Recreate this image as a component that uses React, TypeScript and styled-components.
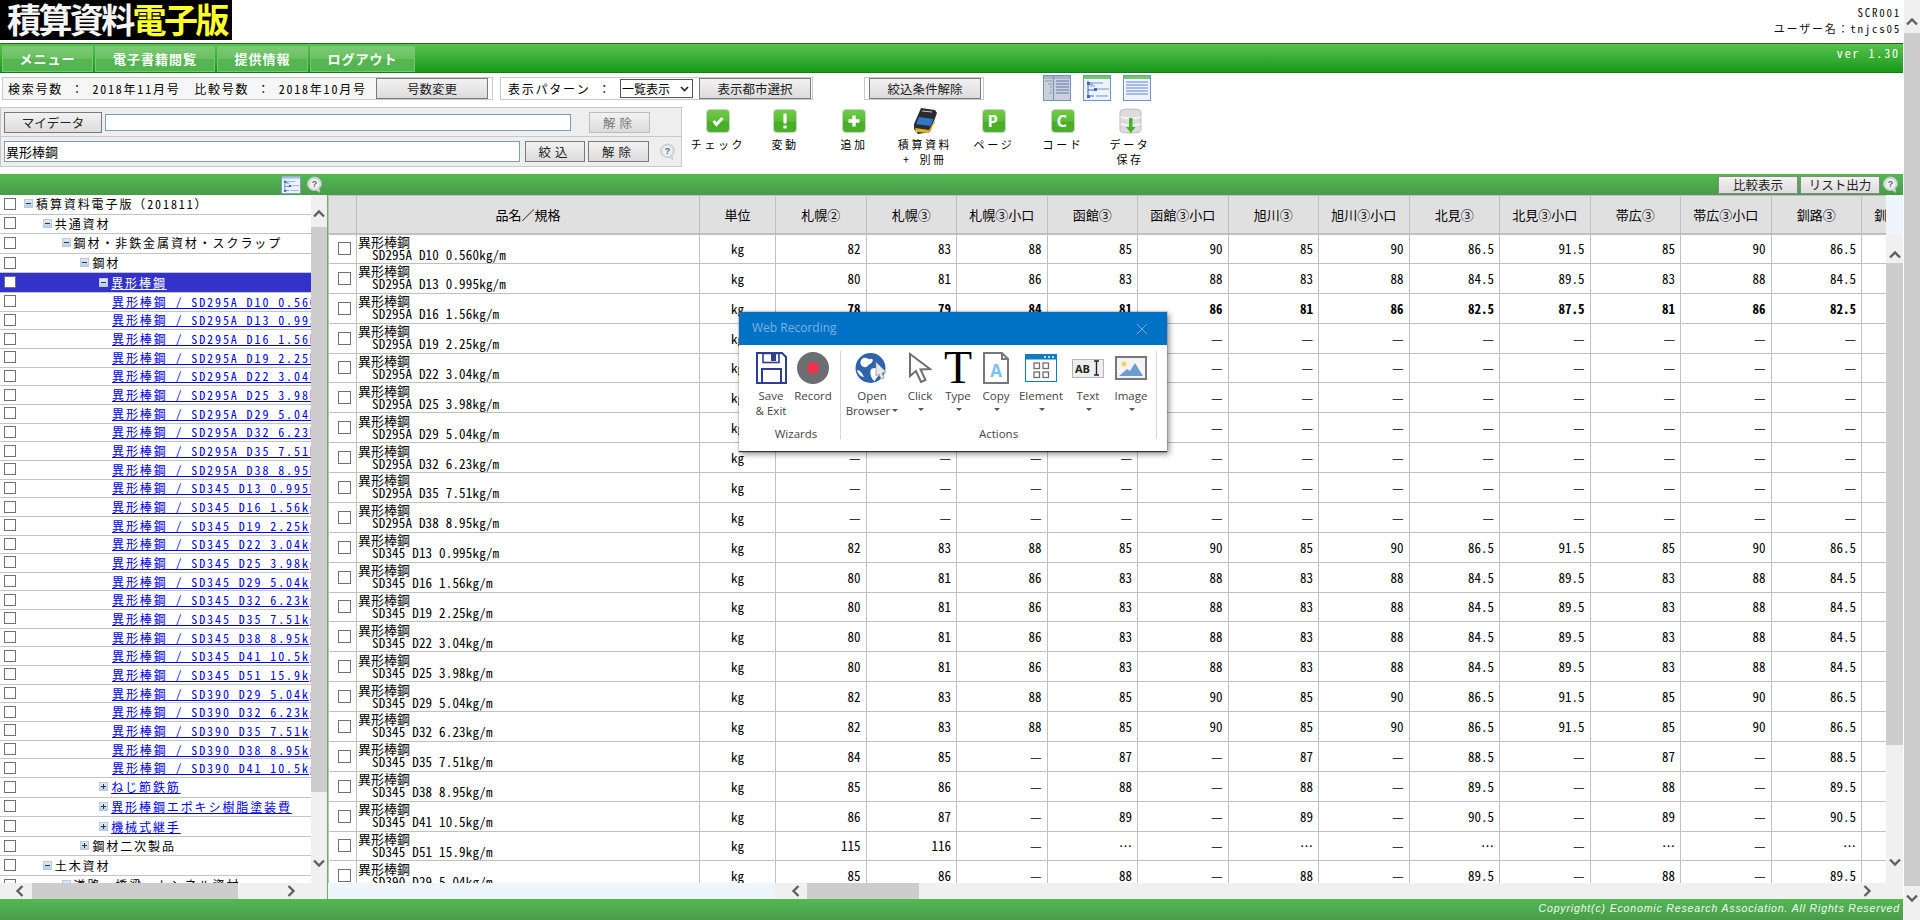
import React from 'react';
import styled, { createGlobalStyle, css } from 'styled-components';

const GOTHIC = `"Noto Sans Mono CJK JP", "Noto Sans CJK JP", "DejaVu Sans Mono", monospace`;
const UI = `"Open Sans", "Noto Sans", sans-serif`;

const GlobalStyle = createGlobalStyle`
  html, body {
    margin: 0;
    padding: 0;
    height: 920px;
    overflow: hidden;
    background: #fff;
  }
  * { box-sizing: border-box; }
`;

const Shell = styled.div`
  position: relative;
  display: flex;
  width: 1920px;
  height: 920px;
  font-family: ${GOTHIC};
  font-size: 12px;
  color: #000;
`;

const Page = styled.div`
  width: 1903px;
  height: 920px;
  display: flex;
  flex-direction: column;
  overflow: hidden;
`;

/* scrollbars */
const Bar = styled.div<{ $vertical?: boolean; $fill?: boolean; $w?: number }>`
  flex: ${({ $fill }) => ($fill ? 1 : 'none')};
  display: flex;
  align-items: center;
  background: #f0f0f0;
  ${({ $vertical, $w }) =>
    $vertical
      ? css`
          flex-direction: column;
          width: ${$w ?? 16}px;
        `
      : css`
          flex-direction: row;
          height: 16px;
        `}
`;

const Thumb = styled.div<{ $vertical?: boolean; $len: number }>`
  flex: none;
  background: #cdcdcd;
  ${({ $vertical, $len }) =>
    $vertical ? `width: 100%; height: ${$len}px;` : `height: 100%; width: ${$len}px;`}
`;

const Spacer = styled.div`
  flex: 1;
`;

const Gap = styled.div<{ $w?: number; $h?: number }>`
  flex: none;
  width: ${({ $w }) => ($w === undefined ? 'auto' : `${$w}px`)};
  height: ${({ $h }) => ($h === undefined ? 'auto' : `${$h}px`)};
`;

const ArrowBox = styled.div`
  flex: none;
  width: 16px;
  height: 16px;
  display: flex;
  align-items: center;
  justify-content: center;
`;

const ChevronSvg = styled.svg<{ $rot: number }>`
  transform: rotate(${({ $rot }) => $rot}deg);
`;

const Chevron = ({ dir }: { dir: 'up' | 'down' | 'left' | 'right' }) => {
  const rot = { up: 0, right: 90, down: 180, left: 270 }[dir];
  return (
    <ArrowBox>
      <ChevronSvg $rot={rot} width="12" height="12" viewBox="0 0 12 12">
        <path d="M1 8.5 L6 3.5 L11 8.5" fill="none" stroke="#606060" strokeWidth="2.4" />
      </ChevronSvg>
    </ArrowBox>
  );
};

/* header */
const TopRow = styled.div`
  height: 43px;
  flex: none;
  display: flex;
  justify-content: space-between;
`;

const Logo = styled.div`
  width: 232px;
  height: 40px;
  background: #000;
  color: #f4f4f4;
  font-family: "Noto Sans CJK JP", sans-serif;
  font-weight: 700;
  font-size: 34px;
  line-height: 38px;
  letter-spacing: -2.6px;
  padding-left: 7px;
  white-space: nowrap;
  span { color: #ffff2e; }
`;

const UserInfo = styled.div`
  text-align: right;
  padding: 5px 2px 0 0;
  font-size: 11px;
  letter-spacing: 1.75px;
  line-height: 15.5px;
  color: #111;
`;

const NavBar = styled.div`
  flex: none;
  height: 30px;
  display: flex;
  justify-content: space-between;
  align-items: flex-start;
  padding: 2px 2px 0;
  gap: 2px;
  background: linear-gradient(#59c24d, #17981a);
  border-top: 1px solid #1f6a1f;
  border-bottom: 1px solid #0f7f14;
`;

const NavGroup = styled.div`
  display: flex;
  gap: 2px;
`;

const NavButton = styled.div<{ $w: number }>`
  width: ${({ $w }) => $w}px;
  height: 26px;
  line-height: 24px;
  text-align: center;
  color: #fff;
  font-size: 13px;
  font-weight: 700;
  letter-spacing: 1px;
  border: 1px solid #74c874;
  background: linear-gradient(#7cca74 0%, #68c060 48%, #55b552 52%, #52b650 100%);
`;

const Version = styled.div`
  color: #fff;
  font-size: 12px;
  line-height: 13px;
  letter-spacing: 1.9px;
  padding-right: 1px;
`;

const FilterRow = styled.div`
  flex: none;
  height: 34px;
  display: flex;
  align-items: flex-start;
  padding: 4px 0 0 2px;
`;

const OutlineBox = styled.div<{ $w: number; $ml?: number }>`
  width: ${({ $w }) => $w}px;
  margin-left: ${({ $ml }) => $ml ?? 0}px;
  height: 23px;
  display: flex;
  align-items: center;
  border: 1px solid #c8c8c8;
`;

const InfoText = styled.div`
  flex: 1;
  align-self: stretch;
  display: flex;
  align-items: center;
  padding-left: 5px;
  letter-spacing: 1.78px;
  white-space: nowrap;
  background: #f6f6f6;
  font-size: 12px;
  overflow: hidden;
`;

const PatternLabel = styled.div`
  padding-left: 7px;
  width: 119px;
  letter-spacing: 1.75px;
  white-space: nowrap;
`;

const PatternSelect = styled.div`
  width: 73px;
  height: 19px;
  border: 1px solid #555;
  background: #fff;
  display: flex;
  align-items: center;
  justify-content: space-between;
  font-size: 12px;
  padding: 0 3px 0 1px;
  white-space: nowrap;
`;

const GrayButton = styled.div<{ $w: number; $disabled?: boolean; $spaced?: boolean }>`
  flex: none;
  width: ${({ $w }) => $w}px;
  height: 21px;
  line-height: 19px;
  text-align: center;
  white-space: nowrap;
  font-size: 12.5px;
  background: linear-gradient(#f2f2f2, #dcdcdc);
  border: 1px solid ${({ $disabled }) => ($disabled ? '#bcbcbc' : '#7a7a7a')};
  color: ${({ $disabled }) => ($disabled ? '#777' : '#222')};
  letter-spacing: ${({ $spaced }) => ($spaced ? '4px' : '0')};
`;

const ViewIcons = styled.div`
  margin-left: 59px;
  display: flex;
  gap: 12px;
  margin-top: -2px;
`;

const ToolRow = styled.div`
  flex: none;
  height: 67px;
  display: flex;
  align-items: flex-start;
`;

const SearchPanel = styled.div`
  width: 682px;
  height: 60px;
  background: #eeeeee;
  border: 1px solid #c8c8c8;
  display: flex;
  flex-direction: column;
`;

const SearchLine = styled.div<{ $top?: boolean }>`
  height: 29px;
  display: flex;
  align-items: center;
  padding-left: 3px;
  gap: 3px;
  ${({ $top }) => $top && `border-bottom: 1px solid #c8c8c8;`}
`;

const TextBox = styled.div<{ $w: number; $h: number; $mr?: number }>`
  width: ${({ $w }) => $w}px;
  height: ${({ $h }) => $h}px;
  margin-right: ${({ $mr }) => $mr ?? 0}px;
  background: #fff;
  border: 1px solid #7f9db9;
  padding-left: 1px;
  font-size: 13px;
  line-height: ${({ $h }) => $h - 2}px;
`;

const HelpSlot = styled.div`
  margin-left: 7px;
  display: flex;
`;

const ToolStrip = styled.div`
  display: flex;
`;

const Tool = styled.div<{ $w: number }>`
  width: ${({ $w }) => $w}px;
  display: flex;
  flex-direction: column;
  align-items: center;
  font-size: 11px;
  letter-spacing: 2.6px;
  line-height: 15px;
  text-align: center;
  white-space: pre-line;
`;

const ToolIconBox = styled.div`
  width: 28px;
  height: 28px;
  margin-bottom: 2px;
  display: flex;
  align-items: center;
  justify-content: center;
`;

/* section bar */
const SectionBar = styled.div`
  flex: none;
  height: 21px;
  display: flex;
  background: linear-gradient(#54b854, #489c48);
`;

const SectionLeft = styled.div`
  width: 328px;
  display: flex;
  align-items: center;
  padding-left: 281px;
  gap: 5px;
`;

const SectionRight = styled.div`
  flex: 1;
  display: flex;
  justify-content: flex-end;
  align-items: center;
  gap: 2px;
  padding-right: 4px;
`;

const SmallButton = styled(GrayButton)`
  height: 18px;
  line-height: 16px;
  border-color: #888;
`;

/* main */
const Main = styled.div`
  flex: none;
  height: 704px;
  display: flex;
`;

const TreePane = styled.div`
  width: 328px;
  flex: none;
  display: flex;
  flex-direction: column;
  border-right: 1px solid #60b860;
`;

const TreeBody = styled.div`
  height: 688px;
  display: flex;
`;

const TreeList = styled.div`
  width: 311px;
  flex: none;
  overflow: hidden;
  letter-spacing: 1.9px;
  font-size: 12px;
`;

const TreeRow = styled.div<{ $selected?: boolean; $leaf?: boolean }>`
  height: ${({ $leaf }) => ($leaf ? 18.66 : 19.6)}px;
  display: flex;
  align-items: center;
  white-space: nowrap;
  overflow: hidden;
  padding-bottom: 1px;
  border-bottom: 1px solid #c4c4c4;
  background: ${({ $selected }) => ($selected ? '#3333cc' : 'transparent')};
`;

const Check = styled.span<{ $size?: number }>`
  flex: none;
  display: inline-block;
  width: ${({ $size }) => $size ?? 12}px;
  height: ${({ $size }) => $size ?? 12}px;
  background: #fff;
  border: 1px solid #707070;
`;

const TreeCheck = styled(Check)`
  margin-left: 4px;
`;

const Indent = styled.span<{ $px: number }>`
  flex: none;
  width: ${({ $px }) => $px}px;
`;

const Toggle = styled.span`
  flex: none;
  width: 9px;
  height: 9px;
  margin-right: 3px;
  display: flex;
  align-items: center;
  justify-content: center;
  background: linear-gradient(#dfeaf6, #b9cfe6);
  border: 1px solid #b6cbe0;
  font-size: 0;
`;

const ToggleMark = styled.span<{ $plus?: boolean }>`
  position: relative;
  display: block;
  width: 5px;
  height: 1px;
  background: #333;
  ${({ $plus }) =>
    $plus &&
    `&:after { content: ''; position: absolute; left: 2px; top: -2px; width: 1px; height: 5px; background: #333; }`}
`;

const TreeLink = styled.a<{ $selected?: boolean }>`
  color: ${({ $selected }) => ($selected ? '#fff' : '#0000ee')};
  text-decoration: underline;
`;

const TablePane = styled.div`
  flex: 1;
  min-width: 0;
  display: flex;
  flex-direction: column;
`;

const TableArea = styled.div`
  height: 688px;
  display: flex;
`;

const TableClip = styled.div`
  width: 1558px;
  flex: none;
  overflow: hidden;
`;

const DataTable = styled.table`
  table-layout: fixed;
  border-collapse: collapse;
  width: 1623.5px;
  font-size: 13px;
`;

const Col = styled.col<{ $w: number }>`
  width: ${({ $w }) => $w}px;
`;

const HeadCell = styled.th`
  height: 38px;
  padding: 0;
  background: #e0e0e0;
  border: 1px solid #c0c0c0;
  border-bottom-width: 2px;
  font-weight: 400;
  font-size: 13px;
  text-align: center;
  white-space: nowrap;
  overflow: hidden;
`;

const BodyRow = styled.tr<{ $bold?: boolean }>`
  height: 29.89px;
  font-weight: ${({ $bold }) => ($bold ? 700 : 400)};
`;

const Cell = styled.td`
  padding: 0 5px 0 0;
  border: 1px solid #c0c0c0;
  text-align: right;
  white-space: nowrap;
  overflow: hidden;
`;

const UnitCell = styled(Cell)`
  padding: 0;
  text-align: center;
  font-weight: 400;
`;

const CheckCell = styled.td`
  padding: 0 0 0 9px;
  border: 1px solid #c0c0c0;
  font-size: 0;
`;

const NameCell = styled.td`
  padding: 0 0 0 1px;
  border: 1px solid #c0c0c0;
  line-height: 13px;
  white-space: nowrap;
  font-weight: 400;
  overflow: hidden;
`;

const NameMain = styled.div`
  font-size: 13px;
  margin-top: -2px;
`;

const NameSpec = styled.div`
  padding-left: 14px;
  font-size: 13px;
  letter-spacing: 0.2px;
`;

const Corner = styled.div`
  flex: none;
  height: 39px;
  background: #eff5fc;
`;

const TableScrollColumn = styled.div`
  flex: none;
  width: 17px;
  display: flex;
  flex-direction: column;
`;

const HScrollRow = styled.div`
  display: flex;
  height: 16px;
`;

const FrozenFill = styled.div`
  flex: none;
  width: 447px;
  background: #eff5fc;
`;

const Footer = styled.div`
  flex: none;
  height: 21px;
  background: linear-gradient(#54b854, #489c48);
  color: #f4fbf4;
  font-family: "Liberation Sans", Arial, sans-serif;
  font-style: italic;
  font-size: 10.5px;
  letter-spacing: 0.85px;
  text-align: right;
  line-height: 19px;
  padding-right: 3px;
`;

const PageScroll = styled.div`
  flex: none;
  width: 17px;
  height: 920px;
  padding-left: 1px;
  display: flex;
`;

/* recording popup */
const Popup = styled.div`
  position: absolute;
  left: 739px;
  top: 312px;
  width: 428px;
  height: 140px;
  background: #fff;
  font-family: ${UI};
  color: #444;
  border-bottom: 1px solid #333;
  box-shadow: 2px 2px 6px rgba(0, 0, 0, 0.45), 0 0 0 1px rgba(0, 0, 0, 0.12);
`;

const PopupTitle = styled.div`
  height: 33px;
  background: #0072c6;
  color: #78b4e2;
  font-size: 12px;
  line-height: 32px;
  padding-left: 13px;
  display: flex;
  justify-content: space-between;
`;

const PopupClose = styled.div`
  width: 44px;
  display: flex;
  align-items: center;
  justify-content: center;
  padding-right: 6px;
`;

const PopupBody = styled.div`
  display: flex;
  height: 106px;
  padding-top: 6px;
`;

const RibbonGroup = styled.div<{ $w: number; $pl?: number }>`
  width: ${({ $w }) => $w}px;
  padding-left: ${({ $pl }) => $pl ?? 0}px;
  flex: none;
  display: flex;
  flex-direction: column;
  border-right: 1px solid #d6d6d6;
  height: 88px;
`;

const RibbonItems = styled.div`
  display: flex;
  flex: 1;
  margin-top: -1px;
`;

const RibbonItem = styled.div<{ $w: number }>`
  width: ${({ $w }) => $w}px;
  flex: none;
  display: flex;
  flex-direction: column;
  align-items: center;
  text-align: center;
  font-size: 11.5px;
  line-height: 14.5px;
  white-space: pre-line;
`;

const RibbonIcon = styled.div`
  height: 36px;
  margin-bottom: 3px;
  display: flex;
  align-items: center;
  justify-content: center;
`;

const BigT = styled.span`
  font-family: "Liberation Serif", serif;
  font-size: 46px;
  line-height: 36px;
  color: #000;
`;

const Caret = styled.span`
  display: inline-block;
  width: 0;
  height: 0;
  border-left: 3px solid transparent;
  border-right: 3px solid transparent;
  border-top: 3px solid #555;
  vertical-align: middle;
  margin: 0 0 2px 2px;
`;

const CaretLine = styled.div`
  height: 14px;
  line-height: 12px;
`;

const GroupName = styled.div`
  flex: none;
  height: 16px;
  margin-bottom: -3px;
  text-align: center;
  font-size: 11.5px;
  line-height: 16px;
`;

/* drawn icons */
const HelpIcon = ({ size = 16 }: { size?: number }) => (
  <svg width={size} height={size} viewBox="0 0 16 16">
    <path d="M8 1 a7 6.4 0 1 0 2 12.6 L13 15.4 L12.3 11.8 A6.8 6.2 0 0 0 8 1z" fill="#d4dde0" stroke="#bcc6c8" strokeWidth="0.7" />
    <circle cx="8" cy="7.4" r="4.6" fill="#eef2f3" />
    <text x="8" y="10.4" textAnchor="middle" fontSize="8.5" fontWeight="700" fill="#667" fontFamily="Liberation Sans">?</text>
  </svg>
);

const TreeViewIcon = ({ w = 20, h = 18, strip = '#75c76a' }: { w?: number; h?: number; strip?: string }) => (
  <svg width={w} height={h} viewBox="0 0 28 26">
    <rect x="0.5" y="0.5" width="27" height="25" fill="#eef2fa" stroke="#6f93cf" />
    <rect x="1" y="1" width="26" height="3" fill={strip} />
    <path d="M5 6 V21 M5 9 H10 M5 15 H12 M5 21 H11" fill="none" stroke="#3c68c6" />
    <path d="M7 8 H20 M13 14 H26 M13 21 H25 M7 11 H12 " fill="none" stroke="#9db4dd" strokeWidth="1.4" />
    <rect x="4" y="7" width="3" height="3" fill="#3c68c6" />
    <rect x="11" y="13" width="3" height="3" fill="#3c68c6" />
    <rect x="4" y="20" width="3" height="3" fill="#3c68c6" />
  </svg>
);

const SplitViewIcon = () => (
  <svg width="28" height="26" viewBox="0 0 28 26">
    <rect x="0.5" y="0.5" width="27" height="25" fill="#cdd0d8" stroke="#6f93cf" />
    <rect x="1" y="1" width="26" height="3" fill="#a6b3cb" />
    <path d="M10.5 1 V25" stroke="#7b95c8" strokeWidth="1.2" />
    <path d="M13 6 H26 M13 9 H26 M13 12 H26 M13 15 H26 M13 18 H26" stroke="#8297c0" strokeWidth="1.4" />
    <path d="M2 6 H9 M5 9 H9 M7 12 H9 M7 15 H9 M6 18 H9" stroke="#8297c0" />
  </svg>
);

const ListViewIcon = () => (
  <svg width="28" height="26" viewBox="0 0 28 26">
    <rect x="0.5" y="0.5" width="27" height="25" fill="#eef2fa" stroke="#6f93cf" />
    <rect x="1" y="1" width="26" height="3" fill="#75c76a" />
    <path d="M3 7 H25 M3 10 H25 M3 13 H25 M3 16 H25 M3 19 H25" stroke="#5f86d6" strokeWidth="1.2" />
  </svg>
);

const GreenBadge = ({ children }: { children: React.ReactNode }) => (
  <svg width="24" height="24" viewBox="0 0 24 24">
    <defs>
      <linearGradient id="badge" x1="0" y1="0" x2="0" y2="1">
        <stop offset="0" stopColor="#72c94a" />
        <stop offset="0.5" stopColor="#5cbd36" />
        <stop offset="0.55" stopColor="#48ad28" />
        <stop offset="1" stopColor="#4ab02a" />
      </linearGradient>
    </defs>
    <rect x="0.5" y="0.5" width="23" height="23" rx="3.5" fill="url(#badge)" stroke="#c6d6c2" strokeWidth="1" />
    {children}
  </svg>
);

const BookIcon = () => (
  <svg width="23" height="26" viewBox="0 0 23 26">
    <path d="M7 0 L21 2 L23 5 L16 24 L4 26 L0 21 L0 16z" fill="#2b2b30" />
    <path d="M5 9 L19.5 11 L16.5 18 L2 16z" fill="#2f78c8" />
    <path d="M8 3 L18 4" stroke="#c8c8c8" strokeWidth="1" />
    <path d="M1 20 L15 22 L20 13 L21 14 L15 25 L2 24z" fill="#e3b22c" />
  </svg>
);

const DbIcon = () => (
  <svg width="23" height="26" viewBox="0 0 23 26">
    <path d="M1 4 Q1 1 11.5 1 Q22 1 22 4 V22 Q22 25 11.5 25 Q1 25 1 22z" fill="#dcdcdc" stroke="#bcbcbc" />
    <path d="M1.5 9 Q11.5 12 21.5 9 M1.5 16 Q11.5 19 21.5 16" fill="none" stroke="#f7f7f7" strokeWidth="1.6" />
    <path d="M10 10 H13.5 V19 H16.5 L11.8 25 L7 19 H10z" fill="#48b030" />
  </svg>
);

const SaveIcon = () => (
  <svg width="31" height="32" viewBox="0 0 31 32">
    <path d="M1 1 H26 L30 5 V31 H1z" fill="#fff" stroke="#2e3f93" strokeWidth="2" />
    <rect x="7" y="1.5" width="16" height="9" fill="#fff" stroke="#2e3f93" strokeWidth="1.6" />
    <rect x="15" y="2" width="5" height="7" fill="#2e3f93" />
    <rect x="6" y="17" width="19" height="14" fill="#fff" stroke="#2e3f93" strokeWidth="2" />
  </svg>
);

const RecordIcon = () => (
  <svg width="32" height="32" viewBox="0 0 32 32">
    <circle cx="16" cy="16" r="16" fill="#6d6e71" />
    <circle cx="16" cy="16" r="6" fill="#ee3450" />
  </svg>
);

const GlobeIcon = () => (
  <svg width="34" height="32" viewBox="0 0 34 32">
    <circle cx="15.5" cy="16" r="15" fill="#2f63ac" />
    <path d="M8 6 C12 5 14 8 16 7 C18 6 19 10 15 12 C12 13 13 16 9 15 C5 14 4 9 8 6z M16 17 C20 15 26 16 25 20 C25 24 21 25 20 29 C17 28 14 22 16 17z M2 18 C5 18 7 21 9 25 C6 25 3 22 2 18z" fill="#fff" />
    <path d="M21 10 L31 20 L27 21 L29 26 L26 27 L24 22 L21 24z" fill="#e8e8e8" stroke="#999" strokeWidth="0.8" />
  </svg>
);

const CursorIcon = () => (
  <svg width="24" height="32" viewBox="0 0 24 32">
    <path d="M2 2 L2 24 L8 19 L13 30 L17.5 28 L12.5 17.5 L22 17z" fill="#fff" stroke="#6d6e71" strokeWidth="2" />
  </svg>
);

const CopyIcon = () => (
  <svg width="26" height="32" viewBox="0 0 26 32">
    <path d="M1 1 H19 L25 7 V31 H1z" fill="#fff" stroke="#77787b" strokeWidth="2" />
    <path d="M19 1 V7 H25" fill="none" stroke="#77787b" strokeWidth="2" />
    <text x="13" y="25" textAnchor="middle" fontSize="17" fontWeight="700" fill="#7cc1ea" fontFamily="Open Sans">A</text>
  </svg>
);

const ElementIcon = () => (
  <svg width="32" height="28" viewBox="0 0 32 28">
    <rect x="0.5" y="0.5" width="31" height="27" fill="#fff" stroke="#0f7cbd" />
    <rect x="0.5" y="0.5" width="31" height="5" fill="#0f7cbd" />
    <path d="M19 3 H21 M23 3 H25 M27 3 H29" stroke="#fff" strokeWidth="1.4" />
    <rect x="9" y="9" width="5.5" height="5.5" fill="#fff" stroke="#6d6e71" strokeWidth="1.3" />
    <rect x="18" y="9" width="5.5" height="5.5" fill="#fff" stroke="#6d6e71" strokeWidth="1.3" />
    <rect x="9" y="18" width="5.5" height="5.5" fill="#fff" stroke="#6d6e71" strokeWidth="1.3" />
    <rect x="18" y="18" width="5.5" height="5.5" fill="#fff" stroke="#6d6e71" strokeWidth="1.3" />
  </svg>
);

const TextToolIcon = () => (
  <svg width="32" height="19" viewBox="0 0 32 19">
    <rect x="0.5" y="0.5" width="31" height="18" fill="#eeeeee" stroke="#b5b5b5" />
    <text x="3" y="14" fontSize="11" fontWeight="700" fill="#222" fontFamily="Open Sans">AB</text>
    <path d="M22 2 H27 M24.5 2 V16 M22 16 H27" stroke="#222" strokeWidth="1.4" fill="none" />
  </svg>
);

const ImageToolIcon = () => (
  <svg width="32" height="24" viewBox="0 0 32 24">
    <rect x="1" y="1" width="30" height="22" fill="#f4f4f4" stroke="#77787b" strokeWidth="2" />
    <circle cx="9" cy="8" r="2.6" fill="#f2d36b" />
    <path d="M4 20 L12 13 L15 15 L20 7 L28 20z" fill="#6f9bd2" />
  </svg>
);

const TOOLS: { icon: React.ReactNode; label: string; w: number }[] = [
  { icon: <GreenBadge><path d="M7.5 12 L10.5 15.5 L16.5 9" fill="none" stroke="#fff" strokeWidth="3" /></GreenBadge>, label: 'チェック', w: 72 },
  { icon: <GreenBadge><rect x="10.4" y="4.5" width="3.2" height="10" rx="1" fill="#fff" /><rect x="10.4" y="16.5" width="3.2" height="3" fill="#fff" /></GreenBadge>, label: '変動', w: 62 },
  { icon: <GreenBadge><path d="M12 6.5 V17.5 M6.5 12 H17.5" stroke="#fff" strokeWidth="3.4" /></GreenBadge>, label: '追加', w: 76 },
  { icon: <BookIcon />, label: '積算資料\n+ 別冊', w: 66 },
  { icon: <GreenBadge><text x="12" y="18" textAnchor="middle" fontSize="16.5" fontWeight="700" fill="#fff" fontFamily="Open Sans">P</text></GreenBadge>, label: 'ページ', w: 72 },
  { icon: <GreenBadge><text x="12" y="18" textAnchor="middle" fontSize="16.5" fontWeight="700" fill="#fff" fontFamily="Open Sans">C</text></GreenBadge>, label: 'コード', w: 66 },
  { icon: <DbIcon />, label: 'データ\n保存', w: 68 },
];

const CITIES = ['札幌②', '札幌③', '札幌③小口', '函館③', '函館③小口', '旭川③', '旭川③小口', '北見③', '北見③小口', '帯広③', '帯広③小口', '釧路③', '釧路③小口'];

const series = (b: number) => [b, b + 1, b + 6, b + 3, b + 8, b + 3, b + 8, b + 4.5, b + 9.5, b + 3, b + 8, b + 4.5, ''].map(String);
const dashes = () => [...Array(12).fill('—'), ''];
const big = (b: number) => [b, b + 1, '—', b + 3, '—', b + 3, '—', b + 4.5, '—', b + 3, '—', b + 4.5, ''].map(String);

const ROWS: { spec: string; values: string[]; bold?: boolean }[] = [
  { spec: 'SD295A D10 0.560kg/m', values: series(82) },
  { spec: 'SD295A D13 0.995kg/m', values: series(80) },
  { spec: 'SD295A D16 1.56kg/m', values: series(78), bold: true },
  { spec: 'SD295A D19 2.25kg/m', values: dashes() },
  { spec: 'SD295A D22 3.04kg/m', values: dashes() },
  { spec: 'SD295A D25 3.98kg/m', values: dashes() },
  { spec: 'SD295A D29 5.04kg/m', values: dashes() },
  { spec: 'SD295A D32 6.23kg/m', values: dashes() },
  { spec: 'SD295A D35 7.51kg/m', values: dashes() },
  { spec: 'SD295A D38 8.95kg/m', values: dashes() },
  { spec: 'SD345 D13 0.995kg/m', values: series(82) },
  { spec: 'SD345 D16 1.56kg/m', values: series(80) },
  { spec: 'SD345 D19 2.25kg/m', values: series(80) },
  { spec: 'SD345 D22 3.04kg/m', values: series(80) },
  { spec: 'SD345 D25 3.98kg/m', values: series(80) },
  { spec: 'SD345 D29 5.04kg/m', values: series(82) },
  { spec: 'SD345 D32 6.23kg/m', values: series(82) },
  { spec: 'SD345 D35 7.51kg/m', values: big(84) },
  { spec: 'SD345 D38 8.95kg/m', values: big(85) },
  { spec: 'SD345 D41 10.5kg/m', values: big(86) },
  { spec: 'SD345 D51 15.9kg/m', values: ['115', '116', '—', '…', '—', '…', '—', '…', '—', '…', '—', '…', ''] },
  { spec: 'SD390 D29 5.04kg/m', values: big(85) },
];

const TREE_LINKS = [
  'SD295A D10 0.560kg/m', 'SD295A D13 0.995kg/m', 'SD295A D16 1.56kg/m', 'SD295A D19 2.25kg/m',
  'SD295A D22 3.04kg/m', 'SD295A D25 3.98kg/m', 'SD295A D29 5.04kg/m', 'SD295A D32 6.23kg/m',
  'SD295A D35 7.51kg/m', 'SD295A D38 8.95kg/m', 'SD345 D13 0.995kg/m', 'SD345 D16 1.56kg/m',
  'SD345 D19 2.25kg/m', 'SD345 D22 3.04kg/m', 'SD345 D25 3.98kg/m', 'SD345 D29 5.04kg/m',
  'SD345 D32 6.23kg/m', 'SD345 D35 7.51kg/m', 'SD345 D38 8.95kg/m', 'SD345 D41 10.5kg/m',
  'SD345 D51 15.9kg/m', 'SD390 D29 5.04kg/m', 'SD390 D32 6.23kg/m', 'SD390 D35 7.51kg/m',
  'SD390 D38 8.95kg/m', 'SD390 D41 10.5kg/m',
];

const Node = ({ level, label, mark, link, selected }: { level: number; label: string; mark: '-' | '+'; link?: boolean; selected?: boolean }) => (
  <TreeRow $selected={selected}>
    <TreeCheck />
    <Indent $px={8 + level * 18.8} />
    <Toggle><ToggleMark $plus={mark === '+'} /></Toggle>
    {link ? <TreeLink $selected={selected}>{label}</TreeLink> : label}
  </TreeRow>
);

export default function App() {
  return (
    <Shell>
      <GlobalStyle />
      <Page>
        <TopRow>
          <Logo>積算資料<span>電子版</span></Logo>
          <UserInfo>
            SCR001
            <br />
            ユーザー名：tnjcs05
          </UserInfo>
        </TopRow>
        <NavBar>
          <NavGroup>
            <NavButton $w={91}>メニュー</NavButton>
            <NavButton $w={120}>電子書籍閲覧</NavButton>
            <NavButton $w={91}>提供情報</NavButton>
            <NavButton $w={105}>ログアウト</NavButton>
          </NavGroup>
          <Version>ver 1.30</Version>
        </NavBar>
        <FilterRow>
          <OutlineBox $w={491}>
            <InfoText>検索号数 ： 2018年11月号　比較号数 ： 2018年10月号</InfoText>
            <GrayButton $w={112}>号数変更</GrayButton>
            <Gap $w={4} />
          </OutlineBox>
          <OutlineBox $w={313} $ml={7}>
            <PatternLabel>表示パターン ：</PatternLabel>
            <PatternSelect>
              一覧表示
              <svg width="9" height="6" viewBox="0 0 9 6">
                <path d="M1 1 L4.5 4.5 L8 1" fill="none" stroke="#222" strokeWidth="1.6" />
              </svg>
            </PatternSelect>
            <Gap $w={6} />
            <GrayButton $w={112}>表示都市選択</GrayButton>
          </OutlineBox>
          <OutlineBox $w={120} $ml={51}>
            <Gap $w={4} />
            <GrayButton $w={112}>絞込条件解除</GrayButton>
          </OutlineBox>
          <ViewIcons>
            <SplitViewIcon />
            <TreeViewIcon w={28} h={26} />
            <ListViewIcon />
          </ViewIcons>
        </FilterRow>
        <ToolRow>
          <SearchPanel>
            <SearchLine $top>
              <GrayButton $w={98}>マイデータ</GrayButton>
              <TextBox $w={466} $h={17} $mr={15} />
              <GrayButton $w={61} $disabled $spaced>解除</GrayButton>
            </SearchLine>
            <SearchLine>
              <TextBox $w={516} $h={21} $mr={2}>異形棒鋼</TextBox>
              <GrayButton $w={60} $spaced>絞込</GrayButton>
              <GrayButton $w={61} $spaced>解除</GrayButton>
              <HelpSlot><HelpIcon size={17} /></HelpSlot>
            </SearchLine>
          </SearchPanel>
          <ToolStrip>
            {TOOLS.map((t) => (
              <Tool key={t.label} $w={t.w}>
                <ToolIconBox>{t.icon}</ToolIconBox>
                {t.label}
              </Tool>
            ))}
          </ToolStrip>
        </ToolRow>
        <SectionBar>
          <SectionLeft>
            <TreeViewIcon strip="#a9c4ea" />
            <HelpIcon size={17} />
          </SectionLeft>
          <SectionRight>
            <SmallButton $w={80}>比較表示</SmallButton>
            <SmallButton $w={80}>リスト出力</SmallButton>
            <HelpIcon size={17} />
          </SectionRight>
        </SectionBar>
        <Main>
          <TreePane>
            <TreeBody>
              <TreeList>
                <Node level={0} label="積算資料電子版（201811）" mark="-" />
                <Node level={1} label="共通資材" mark="-" />
                <Node level={2} label="鋼材・非鉄金属資材・スクラップ" mark="-" />
                <Node level={3} label="鋼材" mark="-" />
                <Node level={4} label="異形棒鋼" mark="-" link selected />
                {TREE_LINKS.map((s) => (
                  <TreeRow key={s} $leaf>
                    <TreeCheck />
                    <Indent $px={96} />
                    <TreeLink>{`異形棒鋼 / ${s}`}</TreeLink>
                  </TreeRow>
                ))}
                <Node level={4} label="ねじ節鉄筋" mark="+" link />
                <Node level={4} label="異形棒鋼エポキシ樹脂塗装費" mark="+" link />
                <Node level={4} label="機械式継手" mark="+" link />
                <Node level={3} label="鋼材二次製品" mark="+" />
                <Node level={1} label="土木資材" mark="-" />
                <Node level={2} label="道路・橋梁・トンネル資材" mark="-" />
              </TreeList>
              <Bar $vertical>
                <Gap $h={11} />
                <Chevron dir="up" />
                <Gap $h={5} />
                <Thumb $vertical $len={565} />
                <Spacer />
                <Chevron dir="down" />
                <Gap $h={12} />
              </Bar>
            </TreeBody>
            <Bar>
              <Gap $w={12} />
              <Chevron dir="left" />
              <Gap $w={4} />
              <Thumb $len={206} />
              <Spacer />
              <Chevron dir="right" />
              <Gap $w={28} />
            </Bar>
          </TreePane>
          <TablePane>
            <TableArea>
              <TableClip>
                <DataTable>
                  <colgroup>
                    <Col $w={28} />
                    <Col $w={343} />
                    <Col $w={76} />
                    {CITIES.map((c) => (
                      <Col key={c} $w={90.5} />
                    ))}
                  </colgroup>
                  <thead>
                    <tr>
                      <HeadCell />
                      <HeadCell>品名／規格</HeadCell>
                      <HeadCell>単位</HeadCell>
                      {CITIES.map((c) => (
                        <HeadCell key={c}>{c}</HeadCell>
                      ))}
                    </tr>
                  </thead>
                  <tbody>
                    {ROWS.map((r) => (
                      <BodyRow key={r.spec} $bold={r.bold}>
                        <CheckCell><Check $size={13} /></CheckCell>
                        <NameCell>
                          <NameMain>異形棒鋼</NameMain>
                          <NameSpec>{r.spec}</NameSpec>
                        </NameCell>
                        <UnitCell>kg</UnitCell>
                        {r.values.map((v, i) => (
                          <Cell key={i}>{v}</Cell>
                        ))}
                      </BodyRow>
                    ))}
                  </tbody>
                </DataTable>
              </TableClip>
              <TableScrollColumn>
                <Corner />
                <Bar $vertical $fill $w={17}>
                  <Gap $h={13} />
                  <Chevron dir="up" />
                  <Thumb $vertical $len={482} />
                  <Spacer />
                  <Chevron dir="down" />
                  <Gap $h={13} />
                </Bar>
              </TableScrollColumn>
            </TableArea>
            <HScrollRow>
              <FrozenFill />
              <Bar $fill>
                <Gap $w={13} />
                <Chevron dir="left" />
                <Gap $w={3} />
                <Thumb $len={112} />
                <Spacer />
                <Chevron dir="right" />
                <Gap $w={28} />
              </Bar>
            </HScrollRow>
          </TablePane>
        </Main>
        <Footer>Copyright(c) Economic Research Association. All Rights Reserved</Footer>
      </Page>
      <PageScroll>
        <Bar $vertical>
          <Gap $h={14} />
          <Chevron dir="up" />
          <Gap $h={3} />
          <Thumb $vertical $len={853} />
          <Spacer />
          <Chevron dir="down" />
          <Gap $h={14} />
        </Bar>
      </PageScroll>
      <Popup>
        <PopupTitle>
          Web Recording
          <PopupClose>
            <svg width="12" height="12" viewBox="0 0 12 12">
              <path d="M1 1 L11 11 M11 1 L1 11" stroke="#6fb0e0" strokeWidth="1" />
            </svg>
          </PopupClose>
        </PopupTitle>
        <PopupBody>
          <RibbonGroup $w={102} $pl={13}>
            <RibbonItems>
              <RibbonItem $w={38}>
                <RibbonIcon><SaveIcon /></RibbonIcon>
                {'Save\n& Exit'}
              </RibbonItem>
              <RibbonItem $w={46}>
                <RibbonIcon><RecordIcon /></RibbonIcon>
                Record
              </RibbonItem>
            </RibbonItems>
            <GroupName>Wizards</GroupName>
          </RibbonGroup>
          <RibbonGroup $w={316}>
            <RibbonItems>
              <RibbonItem $w={62}>
                <RibbonIcon><GlobeIcon /></RibbonIcon>
                Open
                <div>Browser<Caret /></div>
              </RibbonItem>
              <RibbonItem $w={34}>
                <RibbonIcon><CursorIcon /></RibbonIcon>
                Click
                <CaretLine><Caret /></CaretLine>
              </RibbonItem>
              <RibbonItem $w={42}>
                <RibbonIcon><BigT>T</BigT></RibbonIcon>
                Type
                <CaretLine><Caret /></CaretLine>
              </RibbonItem>
              <RibbonItem $w={34}>
                <RibbonIcon><CopyIcon /></RibbonIcon>
                Copy
                <CaretLine><Caret /></CaretLine>
              </RibbonItem>
              <RibbonItem $w={56}>
                <RibbonIcon><ElementIcon /></RibbonIcon>
                Element
                <CaretLine><Caret /></CaretLine>
              </RibbonItem>
              <RibbonItem $w={38}>
                <RibbonIcon><TextToolIcon /></RibbonIcon>
                Text
                <CaretLine><Caret /></CaretLine>
              </RibbonItem>
              <RibbonItem $w={48}>
                <RibbonIcon><ImageToolIcon /></RibbonIcon>
                Image
                <CaretLine><Caret /></CaretLine>
              </RibbonItem>
            </RibbonItems>
            <GroupName>Actions</GroupName>
          </RibbonGroup>
        </PopupBody>
      </Popup>
    </Shell>
  );
}
